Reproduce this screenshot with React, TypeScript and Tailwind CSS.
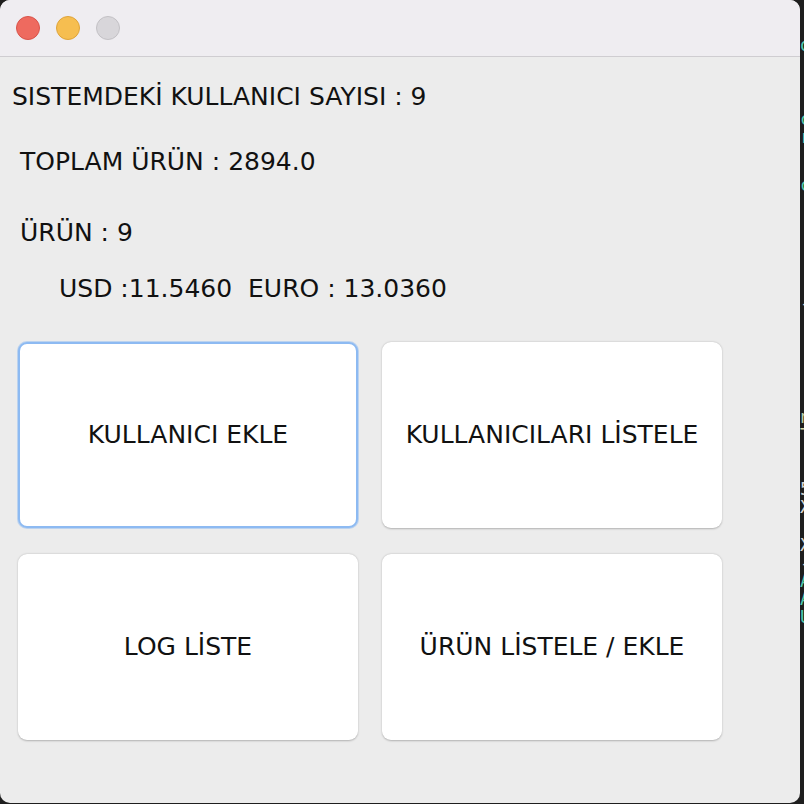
import React from "react";

const strip: { t: string; c: string; h: number }[] = [
  { t: "", c: "", h: 36 },
  { t: "o", c: "text-[#4ec9b0]", h: 18 },
  { t: "", c: "", h: 56 },
  { t: "c", c: "text-[#4ec9b0]", h: 18 },
  { t: "r", c: "text-[#4ec9b0]", h: 18 },
  { t: "", c: "", h: 30 },
  { t: "c", c: "text-[#4ec9b0]", h: 18 },
  { t: "", c: "", h: 100 },
  { t: "-", c: "text-[#d4d4d4]", h: 18 },
  { t: "", c: "", h: 96 },
  { t: "n", c: "text-[#b5cea8]", h: 18 },
  { t: "T", c: "text-[#dcdcaa]", h: 18 },
  { t: "", c: "", h: 36 },
  { t: "5", c: "text-[#d4d4d4]", h: 18 },
  { t: "X", c: "text-[#d4d4d4]", h: 18 },
  { t: "", c: "", h: 20 },
  { t: "X", c: "text-[#d4d4d4]", h: 18 },
  { t: "-", c: "text-[#d4d4d4]", h: 18 },
  { t: "A", c: "text-[#4ec9b0]", h: 18 },
  { t: "A", c: "text-[#4ec9b0]", h: 18 },
  { t: "U", c: "text-[#4ec9b0]", h: 18 },
];

export default function App() {
  return (
    <div
      className="w-[804px] h-[804px] bg-[#1e1e1e] flex overflow-hidden"
      style={{ fontFamily: '"DejaVu Sans", "Liberation Sans", sans-serif' }}
    >
      <div className="w-[800px] h-[803px] shrink-0 rounded-[10px] overflow-hidden bg-[#ececec] flex flex-col">
        <div className="h-[57px] shrink-0 bg-[#efedf1] border-b border-[#cfcdd1] flex items-center pl-4 gap-4">
          <div className="w-6 h-6 rounded-full bg-[#ee6a5f] border border-[#d9534a]" />
          <div className="w-6 h-6 rounded-full bg-[#f6be50] border border-[#dfa43a]" />
          <div className="w-6 h-6 rounded-full bg-[#d8d6da] border border-[#c3c1c5]" />
        </div>
        <div className="flex flex-col pt-[25px] text-[25px] leading-[30px] text-[#111]">
          <div className="pl-[12px]">SISTEMDEKİ KULLANICI SAYISI : 9</div>
          <div className="pl-[20px] mt-[35px]">TOPLAM ÜRÜN : 2894.0</div>
          <div className="pl-[20px] mt-[41px]">ÜRÜN : 9</div>
          <div className="pl-[59px] mt-[26px] whitespace-pre">USD :11.5460  EURO : 13.0360</div>
        </div>
        <div className="grid grid-cols-[340px_340px] grid-rows-[186px_186px] gap-x-[24px] gap-y-[26px] pl-[18px] mt-[38px]">
          <button className="bg-white rounded-[9px] border-2 border-[#8dbaf2] shadow-[0_0_0_1px_rgba(140,186,242,0.5)] flex items-center justify-center text-[25px] text-[#111]">
            KULLANICI EKLE
          </button>
          <button className="bg-white rounded-[9px] shadow-[0_0.5px_2px_rgba(0,0,0,0.25)] flex items-center justify-center text-[25px] text-[#111]">
            KULLANICILARI LİSTELE
          </button>
          <button className="bg-white rounded-[9px] shadow-[0_0.5px_2px_rgba(0,0,0,0.25)] flex items-center justify-center text-[25px] text-[#111]">
            LOG LİSTE
          </button>
          <button className="bg-white rounded-[9px] shadow-[0_0.5px_2px_rgba(0,0,0,0.25)] flex items-center justify-center text-[25px] text-[#111]">
            ÜRÜN LİSTELE / EKLE
          </button>
        </div>
      </div>
      <div
        className="w-[4px] shrink-0 overflow-hidden flex flex-col text-[18px]"
        style={{ fontFamily: '"DejaVu Sans Mono", monospace' }}
      >
        {strip.map((s, i) => (
          <div
            key={i}
            className={`${s.c} shrink-0 overflow-hidden`}
            style={{ height: s.h, lineHeight: `${s.h}px` }}
          >
            {s.t}
          </div>
        ))}
      </div>
    </div>
  );
}
